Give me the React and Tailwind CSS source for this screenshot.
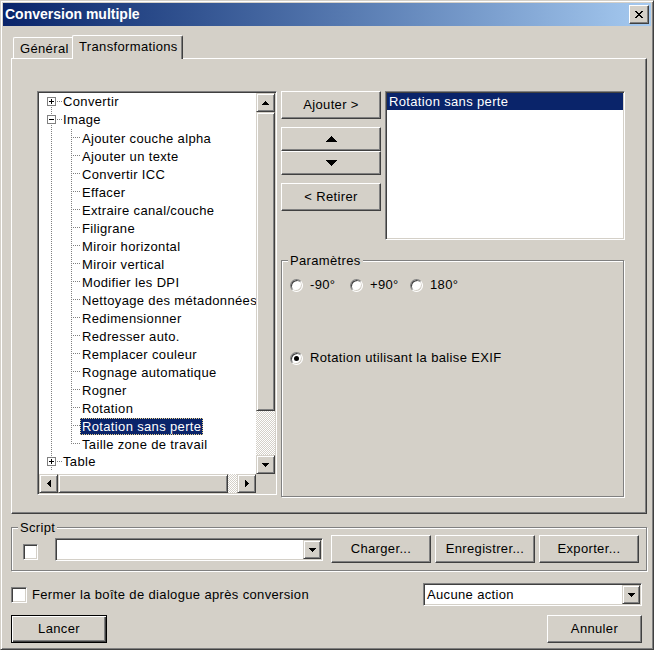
import React from 'react'

const raised = "border border-t-white border-l-white border-r-[#404040] border-b-[#404040] shadow-[inset_-1px_-1px_#808080]"
const sbtn = "border border-t-[#d4d0c8] border-l-[#d4d0c8] border-r-[#404040] border-b-[#404040] shadow-[inset_1px_1px_#fff,inset_-1px_-1px_#808080]"
const sunken = "border border-t-[#808080] border-l-[#808080] border-r-white border-b-white shadow-[inset_1px_1px_#404040,inset_-1px_-1px_#d4d0c8]"
const etched = "border border-[#808080] shadow-[inset_1px_1px_#fff,1px_1px_#fff]"
const checker = "bg-[repeating-conic-gradient(#fff_0_25%,#d4d0c8_0_50%)] bg-[length:2px_2px]"

// pixel triangle, rows = number of pixel rows
const Tri = ({ dir, rows = 4 }) => {
    const base = rows * 2 - 1
    const rects = []
    for (let i = 0; i < rows; i++) {
        const len = base - 2 * i
        if (dir === 'down') rects.push(<rect key={i} x={i} y={i} width={len} height={1} />)
        if (dir === 'up') rects.push(<rect key={i} x={i} y={rows - 1 - i} width={len} height={1} />)
        if (dir === 'right') rects.push(<rect key={i} x={i} y={i} width={1} height={len} />)
        if (dir === 'left') rects.push(<rect key={i} x={rows - 1 - i} y={i} width={1} height={len} />)
    }
    const vert = dir === 'up' || dir === 'down'
    return (
        <svg width={vert ? base : rows} height={vert ? rows : base} shapeRendering="crispEdges" fill="black">
            {rects}
        </svg>
    )
}

const dotsV = (x, y0, y1, k) => {
    const r = []
    for (let y = y0; y < y1; y += 2) r.push(<rect key={k + 'v' + y} x={x} y={y} width={1} height={1} />)
    return r
}
const dotsH = (y, x0, x1, k) => {
    const r = []
    for (let x = x0; x < x1; x += 2) r.push(<rect key={k + 'h' + x} x={x} y={y} width={1} height={1} />)
    return r
}

const tree = [
    { label: "Convertir", top: true, box: "+", above: false },
    { label: "Image", top: true, box: "-", above: true },
    { label: "Ajouter couche alpha" },
    { label: "Ajouter un texte" },
    { label: "Convertir ICC" },
    { label: "Effacer" },
    { label: "Extraire canal/couche" },
    { label: "Filigrane" },
    { label: "Miroir horizontal" },
    { label: "Miroir vertical" },
    { label: "Modifier les DPI" },
    { label: "Nettoyage des métadonnées" },
    { label: "Redimensionner" },
    { label: "Redresser auto." },
    { label: "Remplacer couleur" },
    { label: "Rognage automatique" },
    { label: "Rogner" },
    { label: "Rotation" },
    { label: "Rotation sans perte", selected: true },
    { label: "Taille zone de travail", last: true },
    { label: "Table", top: true, box: "+", above: true },
]

const TreeRow = ({ item }) => {
    if (item.top) {
        return (
            <div className="flex h-[18px] items-center">
                <svg width="24" height="18" shapeRendering="crispEdges" className="shrink-0">
                    <g fill="#808080">
                        {item.above && dotsV(12, 0, 4, 'a')}
                        {dotsV(12, 14, 18, 'b')}
                        {dotsH(8, 18, 24, 'c')}
                    </g>
                    <rect x="8.5" y="4.5" width="8" height="8" fill="#fff" stroke="#808080" />
                    <rect x="10" y="8" width="5" height="1" fill="#000" />
                    {item.box === "+" && <rect x="12" y="6" width="1" height="5" fill="#000" />}
                </svg>
                <span className="leading-[18px] whitespace-nowrap">{item.label}</span>
            </div>
        )
    }
    return (
        <div className="flex h-[18px] items-center">
            <svg width="41" height="18" shapeRendering="crispEdges" className="shrink-0">
                <g fill="#808080">
                    {dotsV(12, 0, 18, 'a')}
                    {dotsV(32, 0, item.last ? 9 : 18, 'b')}
                    {dotsH(8, 34, 41, 'c')}
                </g>
            </svg>
            <span className={"px-[2px] h-[17px] leading-[17px] whitespace-nowrap " + (item.selected ? "bg-[#0a246a] text-white outline outline-1 outline-dotted outline-[#e9d28a] -outline-offset-1" : "")}>
                {item.label}
            </span>
        </div>
    )
}

const Button = ({ children, className = "" }) => (
    <div className={raised + " flex items-center justify-center bg-[#d4d0c8] " + className}>{children}</div>
)

const Combo = ({ text, className = "" }) => (
    <div className={sunken + " bg-white flex items-stretch p-[1px] " + className}>
        <div className="flex-1 pl-[2px] leading-[19px] whitespace-nowrap overflow-hidden">{text}</div>
        <div className={sbtn + " w-[18px] bg-[#d4d0c8] flex items-center justify-center"}>
            <Tri dir="down" rows={4} />
        </div>
    </div>
)

const Check = ({ className = "" }) => (
    <div className={sunken + " bg-white " + className}></div>
)

const Radio = ({ checked }) => (
    <div className="w-[13px] h-[13px] shrink-0 rounded-full bg-white border border-t-[#808080] border-l-[#808080] border-r-white border-b-white shadow-[inset_1px_1px_#404040,inset_-1px_-1px_#d4d0c8] flex items-center justify-center">
        {checked && <div className="w-[5px] h-[5px] rounded-full bg-black"></div>}
    </div>
)

const TreeView = () => (
    <div className={sunken + " w-[240px] h-[404px] bg-white flex flex-col p-[1px]"}>
        <div className="flex flex-1 min-h-0">
            <div className="flex-1 overflow-hidden">
                {tree.map((item, i) => <TreeRow key={i} item={item} />)}
            </div>
            <div className="w-[19px] flex flex-col bg-[#d4d0c8]">
                <div className={sbtn + " h-[19px] flex items-center justify-center"}><Tri dir="up" /></div>
                <div className={sbtn + " h-[299px]"}></div>
                <div className={checker + " flex-1"}></div>
                <div className={sbtn + " h-[19px] flex items-center justify-center"}><Tri dir="down" /></div>
            </div>
        </div>
        <div className="h-[19px] flex bg-[#d4d0c8]">
            <div className={sbtn + " w-[19px] flex items-center justify-center"}><Tri dir="left" /></div>
            <div className={sbtn + " w-[170px]"}></div>
            <div className={checker + " flex-1"}></div>
            <div className={sbtn + " w-[19px] flex items-center justify-center"}><Tri dir="right" /></div>
            <div className="w-[19px]"></div>
        </div>
    </div>
)

const App = () => {
    return (
        <div className="w-[654px] h-[650px] bg-[#d4d0c8] border border-t-[#d4d0c8] border-l-[#d4d0c8] border-r-[#404040] border-b-[#404040] shadow-[inset_1px_1px_#fff,inset_-1px_-1px_#808080] p-[2px] flex flex-col text-[13px] tracking-[0.35px] text-black font-['Liberation_Sans',Arial,sans-serif] overflow-hidden">
            {/* title bar */}
            <div className="h-[23px] shrink-0 flex items-center justify-between bg-linear-to-r from-[#0a246a] to-[#a6caf0]">
                <span className="pl-[2px] text-white font-bold text-[14px] tracking-normal leading-[23px]">Conversion multiple</span>
                <div className={raised + " w-[20px] h-[19px] mr-[2px] bg-[#d4d0c8] flex items-center justify-center"}>
                    <svg width="8" height="7" shapeRendering="crispEdges" fill="black">
                        {[0, 1, 2, 3, 4, 5, 6].map(i => (
                            <g key={i}>
                                <rect x={i} y={i} width="2" height="1" />
                                <rect x={6 - i} y={i} width="2" height="1" />
                            </g>
                        ))}
                    </svg>
                </div>
            </div>

            <div className="flex flex-col pl-[8px] pr-[4px]">
                {/* tabs */}
                <div className="mt-[9px] h-[23px] flex items-end pl-[2px] relative z-10">
                    <div className="w-[61px] h-[21px] border-t border-l border-white rounded-tl-[2px] pl-[6px] leading-[21px]">Général</div>
                    <div className="-ml-[2px] w-[111px] h-[24px] -mb-[1px] bg-[#d4d0c8] border-t border-l border-r border-t-white border-l-white border-r-[#404040] rounded-t-[2px] shadow-[inset_-1px_0_#808080] pl-[6px] leading-[21px]">Transformations</div>
                </div>

                {/* tab page */}
                <div className={raised + " w-[636px] h-[456px] flex gap-[4px] pl-[25px] pt-[32px]"}>
                    <TreeView />
                    <div className="w-[344px] flex flex-col">
                        <div className="flex gap-[4px] h-[149px]">
                            <div className="w-[100px] flex flex-col">
                                <Button className="h-[28px]">Ajouter &gt;</Button>
                                <Button className="h-[24px] mt-[8px]"><Tri dir="up" rows={6} /></Button>
                                <Button className="h-[24px]"><Tri dir="down" rows={6} /></Button>
                                <Button className="h-[28px] mt-[8px]">&lt; Retirer</Button>
                            </div>
                            <div className={sunken + " w-[240px] h-[149px] bg-white p-[1px]"}>
                                <div className="h-[17px] leading-[17px] pl-[2px] bg-[#0a246a] text-white">Rotation sans perte</div>
                            </div>
                        </div>

                        <div className={etched + " relative mt-[20px] h-[237px] w-[343px] pl-[8px] pt-[17px]"}>
                            <span className="absolute left-[6px] -top-[8px] px-[2px] bg-[#d4d0c8] leading-[16px]">Paramètres</span>
                            <div className="flex items-center">
                                <div className="w-[60px] flex items-center gap-[7px]"><Radio /><span className="leading-[14px]">-90°</span></div>
                                <div className="w-[60px] flex items-center gap-[7px]"><Radio /><span className="leading-[14px]">+90°</span></div>
                                <div className="w-[60px] flex items-center gap-[7px]"><Radio /><span className="leading-[14px]">180°</span></div>
                            </div>
                            <div className="mt-[59px] flex items-center gap-[7px]">
                                <Radio checked />
                                <span className="leading-[14px]">Rotation utilisant la balise EXIF</span>
                            </div>
                        </div>
                    </div>
                </div>

                {/* script group */}
                <div className={etched + " relative mt-[13px] h-[44px] w-[636px] flex items-center pl-[11px]"}>
                    <span className="absolute left-[6px] -top-[8px] px-[2px] bg-[#d4d0c8] leading-[16px]">Script</span>
                    <Check className="w-[15px] h-[16px] mt-[6px]" />
                    <Combo text="" className="ml-[17px] w-[268px] h-[23px] mt-[1px]" />
                    <Button className="ml-[8px] w-[100px] h-[28px]">Charger...</Button>
                    <Button className="ml-[4px] w-[100px] h-[28px]">Enregistrer...</Button>
                    <Button className="ml-[4px] w-[100px] h-[28px]">Exporter...</Button>
                </div>

                {/* bottom */}
                <div className="mt-[12px] h-[23px] flex items-center justify-between pr-[5px]">
                    <div className="flex items-center gap-[5px]">
                        <Check className="w-[16px] h-[16px]" />
                        <span>Fermer la boîte de dialogue après conversion</span>
                    </div>
                    <Combo text="Aucune action" className="w-[219px] h-[23px]" />
                </div>
                <div className="mt-[9px] flex justify-between pr-[5px]">
                    <div className="w-[96px] h-[28px] border border-black shadow-[inset_1px_1px_#fff,inset_-1px_-1px_#404040,inset_-2px_-2px_#808080] flex items-center justify-center">Lancer</div>
                    <Button className="w-[95px] h-[28px]">Annuler</Button>
                </div>
            </div>
        </div>
    )
}

export default App
